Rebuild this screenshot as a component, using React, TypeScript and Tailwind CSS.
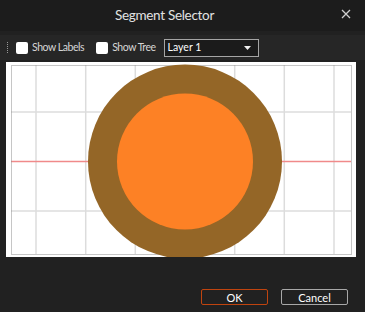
import React from "react";

const gridX = [30, 79.7, 129.3, 179, 228.7, 278.3, 328];
const gridY = [50, 149];

function Checkbox({ label }: { label: string }) {
  return (
    <label className="flex items-center gap-[4px]">
      <span className="w-[12px] h-[12px] rounded-[2px] bg-white" />
      <span className="text-[10.5px] tracking-[-0.45px] text-[#d6d6d6]">{label}</span>
    </label>
  );
}

export default function App() {
  return (
    <div
      className="w-[365px] h-[312px] bg-[#212121] flex flex-col overflow-hidden"
      style={{ fontFamily: "Lato, 'Noto Sans', sans-serif" }}
    >
      {/* title bar */}
      <div className="h-[31px] bg-[#1c1c1c] flex items-center relative">
        <div className="flex-1 text-center text-[13.5px] tracking-[-0.3px] text-[#e2e2e2] pr-[36px]">
          Segment Selector
        </div>
        <button className="absolute right-[14px] top-[9px] leading-none">
          <svg width="10" height="10" viewBox="0 0 10 10">
            <path d="M1 1 L9 9 M9 1 L1 9" stroke="#cfcfcf" strokeWidth="1.3" />
          </svg>
        </button>
      </div>

      {/* toolbar */}
      <div className="mt-[4px] h-[25px] bg-[#262626] flex items-center pl-[7px]">
        <div className="flex flex-col gap-[1px] mr-[8px]">
          {[0, 1, 2, 3, 4, 5].map((i) => (
            <span key={i} className="w-[1px] h-[1px] bg-[#9a9a9a]" />
          ))}
        </div>
        <Checkbox label="Show Labels" />
        <div className="w-[12px]" />
        <Checkbox label="Show Tree" />
        <div className="ml-[8px] w-[95px] h-[18px] border border-[#a5a5a5] bg-[#1b1b1b] flex items-center justify-between pl-[3px] pr-[7px]">
          <span className="text-[10.5px] text-white">Layer 1</span>
          <svg width="7" height="4" viewBox="0 0 7 4">
            <path d="M0 0 L7 0 L3.5 4 Z" fill="#f0f0f0" />
          </svg>
        </div>
      </div>

      {/* canvas */}
      <div className="mt-[2px] mx-[6px] w-[350px] h-[195px] bg-white">
        <svg width="350" height="195" viewBox="0 0 350 195">
          {gridX.map((x) => (
            <line key={x} x1={x} y1={3} x2={x} y2={192} stroke="#dcdcdc" strokeWidth="1.5" />
          ))}
          {gridY.map((y) => (
            <line key={y} x1={5} y1={y} x2={345} y2={y} stroke="#dcdcdc" strokeWidth="1.5" />
          ))}
          <line x1={5} y1={99.5} x2={345} y2={99.5} stroke="#f08a8a" strokeWidth="1.5" />
          <rect
            x={5.5}
            y={3.5}
            width={340}
            height={189}
            fill="none"
            stroke="#8c8c8c"
            strokeWidth="1"
            strokeDasharray="1 1"
          />
          <circle cx={179} cy={99.5} r={97} fill="#946627" />
          <circle cx={179} cy={99.5} r={68} fill="#fd8125" />
        </svg>
      </div>

      {/* buttons */}
      <div className="flex-1 flex items-end justify-end gap-[13px] pr-[17px] pb-[7px]">
        <button className="w-[67px] h-[16px] rounded-[2px] border border-[#c0440f] text-[11px] text-white leading-none">
          OK
        </button>
        <button className="w-[67px] h-[16px] rounded-[2px] border border-[#a8a8a8] text-[11px] text-white leading-none">
          Cancel
        </button>
      </div>
    </div>
  );
}
